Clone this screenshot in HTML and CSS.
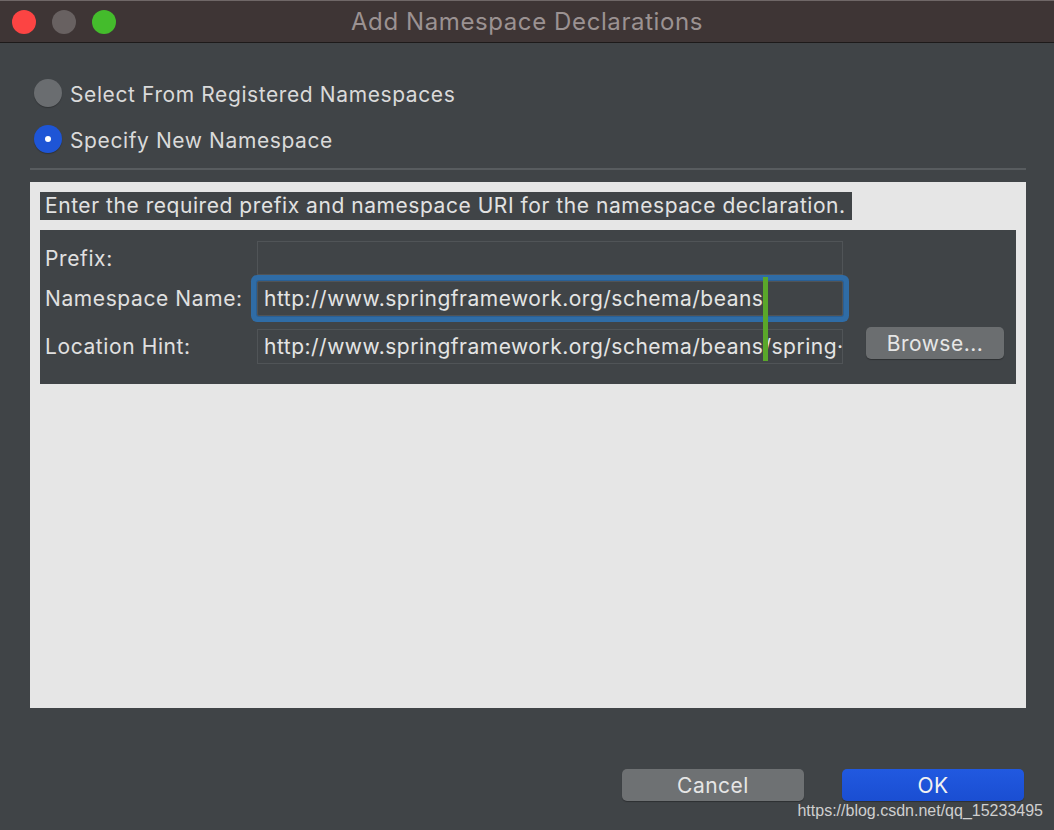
FILE: index.html
```html
<!DOCTYPE html>
<html>
<head>
<meta charset="utf-8">
<link rel="stylesheet" href="styles.css">
</head>
<body>
<div class="window">
  <div class="titlebar">
    <div class="lights">
      <span class="light red"></span>
      <span class="light gray"></span>
      <span class="light green"></span>
    </div>
    <div class="title">Add Namespace Declarations</div>
  </div>
  <div class="content">
    <div class="radios">
      <div class="radio"><span class="knob"></span><span>Select From Registered Namespaces</span></div>
      <div class="radio"><span class="knob on"></span><span>Specify New Namespace</span></div>
    </div>
    <div class="sep"></div>
    <div class="panel">
      <div class="caption">Enter the required prefix and namespace URI for the namespace declaration.</div>
      <div class="form">
        <div class="lbl r1">Prefix:</div>
        <div class="field r1"></div>
        <div class="lbl r2">Namespace Name:</div>
        <div class="field r2 focus">http://www.springframework.org/schema/beans</div>
        <div class="lbl r3">Location Hint:</div>
        <div class="field r3 clip"><span>http://www.springframework.org/schema/beans/spring·</span></div>
        <div class="btn browse r3">Browse...</div>
        <div class="marker"></div>
      </div>
    </div>
    <div class="actions">
      <div class="btn cancel">Cancel</div>
      <div class="btn ok">OK</div>
    </div>
  </div>
  <div class="watermark">https://blog.csdn.net/qq_15233495</div>
</div>
</body>
</html>
```

FILE: styles.css
```css
* { box-sizing: border-box; }
html, body { margin: 0; padding: 0; }
body {
  width: 1054px;
  height: 830px;
  overflow: hidden;
  background: #404447;
  font-family: Inter, Roboto, "Noto Sans", sans-serif;
  color: #dcdcdc;
}
.window {
  position: relative;
  width: 1054px;
  height: 830px;
  background: #404447;
}
.titlebar {
  position: relative;
  height: 43px;
  background: #3e3535;
  border-top: 1px solid #6f6767;
  border-bottom: 1px solid #1d1a1a;
  display: flex;
  align-items: center;
  justify-content: center;
}
.lights {
  position: absolute;
  left: 12px;
  top: 9px;
  display: flex;
  gap: 16px;
}
.light {
  width: 24px;
  height: 24px;
  border-radius: 50%;
  display: block;
}
.red { background: #fc4443; }
.gray { background: #686161; }
.green { background: #44bc2c; }
.title {
  font-size: 24px;
  color: #9b9292;
  letter-spacing: 0.6px;
}
.content {
  padding: 36px 28px 0 30px;
}
.radios {
  display: flex;
  flex-direction: column;
  gap: 18px;
  padding-left: 4px;
}
.radio {
  display: flex;
  align-items: center;
  height: 28px;
  font-size: 21px;
  letter-spacing: 0.6px;
  color: #dadada;
  padding-top: 2px;
}
.knob {
  width: 28px;
  height: 28px;
  border-radius: 50%;
  background: #6a6d70;
  margin-right: 8px;
  margin-top: -2px;
  flex: none;
  box-shadow: 0 1px 1px rgba(0,0,0,0.25);
  position: relative;
}
.knob.on {
  background: #1e55d6;
}
.knob.on::after {
  content: "";
  position: absolute;
  left: 11px;
  top: 11px;
  width: 6px;
  height: 6px;
  border-radius: 50%;
  background: #ffffff;
}
.sep {
  margin-top: 15px;
  height: 2px;
  background: #585c5f;
}
.panel {
  margin-top: 12px;
  height: 526px;
  background: #e6e6e6;
  padding: 10px 10px;
}
.caption {
  display: inline-block;
  height: 28px;
  line-height: 28px;
  padding: 0 6px 0 5px;
  background: #404447;
  font-size: 21px;
  letter-spacing: 0.55px;
  color: #e2e2e2;
  white-space: nowrap;
}
.form {
  position: relative;
  margin-top: 10px;
  height: 154px;
  background: #404447;
  display: grid;
  grid-template-columns: 217px 586px 161px;
  grid-template-rows: auto auto auto;
  align-content: start;
  align-items: start;
  padding-top: 11px;
}
.r1 { grid-row: 1; height: 34px; }
.r2 { grid-row: 2; margin-top: 6px; height: 35px; }
.r3 { grid-row: 3; margin-top: 13px; height: 35px; }
.lbl {
  grid-column: 1;
  padding-left: 5px;
  font-size: 21px;
  letter-spacing: 0.6px;
  color: #e0e0e0;
  display: flex;
  align-items: center;
  white-space: nowrap;
}
.field {
  grid-column: 2;
  border: 1px solid #505457;
  background: #404447;
  font-size: 21px;
  letter-spacing: 0.5px;
  color: #e4e4e4;
  padding-left: 6px;
  display: flex;
  align-items: center;
  white-space: nowrap;
  overflow: hidden;
}
.field.focus {
  border-radius: 2px;
  box-shadow: 0 0 0 1px #2a5f94, 0 0 0 6px #2f6ca6;
}
.btn {
  display: flex;
  align-items: center;
  justify-content: center;
  font-size: 21px;
  letter-spacing: 0.5px;
  color: #e6e6e6;
  border-radius: 5px;
}
.form .browse {
  grid-column: 3;
  margin-left: 23px;
  width: 138px;
  height: 32px;
  margin-top: 11px;
  background: #6b6e70;
  box-shadow: 0 1px 1px rgba(0,0,0,0.3);
}
.marker {
  position: absolute;
  left: 723px;
  top: 47px;
  width: 5px;
  height: 84px;
  background: #5aa72a;
}
.actions {
  display: flex;
  justify-content: flex-end;
  gap: 38px;
  margin-top: 61px;
  padding-right: 2px;
}
.actions .btn {
  width: 182px;
  height: 32px;
}
.cancel {
  background: #6e7173;
  box-shadow: 0 1px 1px rgba(0,0,0,0.3);
}
.ok {
  background: linear-gradient(#2159e0, #1a4ed2);
  color: #f2f2f2;
  box-shadow: 0 1px 1px rgba(0,0,0,0.3);
}
.watermark {
  position: absolute;
  right: 11px;
  top: 802px;
  font-family: "Liberation Sans", Arial, sans-serif;
  font-size: 16px;
  color: #cfcfcf;
}
```
